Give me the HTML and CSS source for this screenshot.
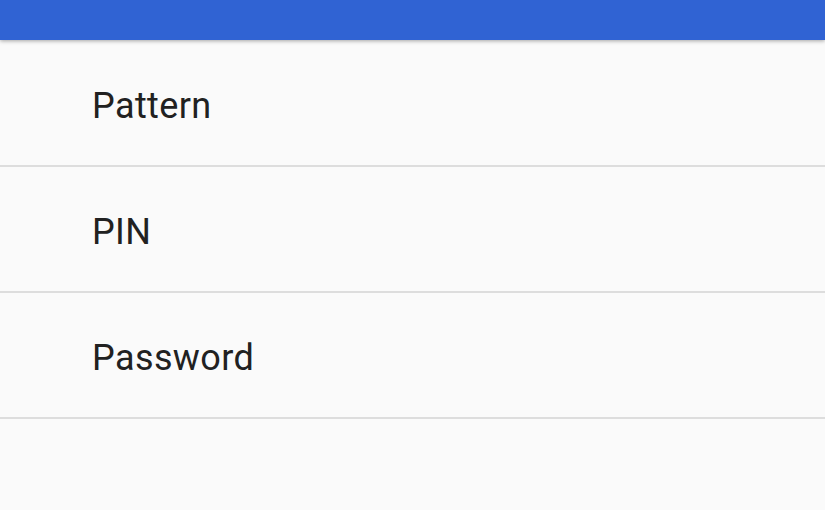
FILE: index.html
```html
<!DOCTYPE html>
<html lang="en">
<head>
  <meta charset="UTF-8">
  <meta name="viewport" content="width=device-width, initial-scale=1.0">
  <title>Screen lock</title>
  <link rel="stylesheet" href="styles.css">
</head>
<body>
  <header class="app-bar"></header>
  <ul class="lock-list">
    <li class="lock-item">Pattern</li>
    <li class="lock-item">PIN</li>
    <li class="lock-item">Password</li>
  </ul>
</body>
</html>
```

FILE: styles.css
```css
body {margin: 0; background: #fafafa; font-family: Roboto, "Noto Sans", sans-serif; color: #212121; height: 510px; overflow: hidden;}
.app-bar {position: relative; z-index: 1; height: 40px; background: #3063d3; box-shadow: 0 1px 4px rgba(0, 0, 0, 0.35);}
.lock-list {list-style: none; margin: 1px 0 0; padding: 0;}
.lock-item {display: flex; align-items: center; height: 126px; box-sizing: border-box; padding: 6px 0 0 92px; border-bottom: 2px solid #dddddd; font-size: 36px; letter-spacing: 0.4px;}
```
